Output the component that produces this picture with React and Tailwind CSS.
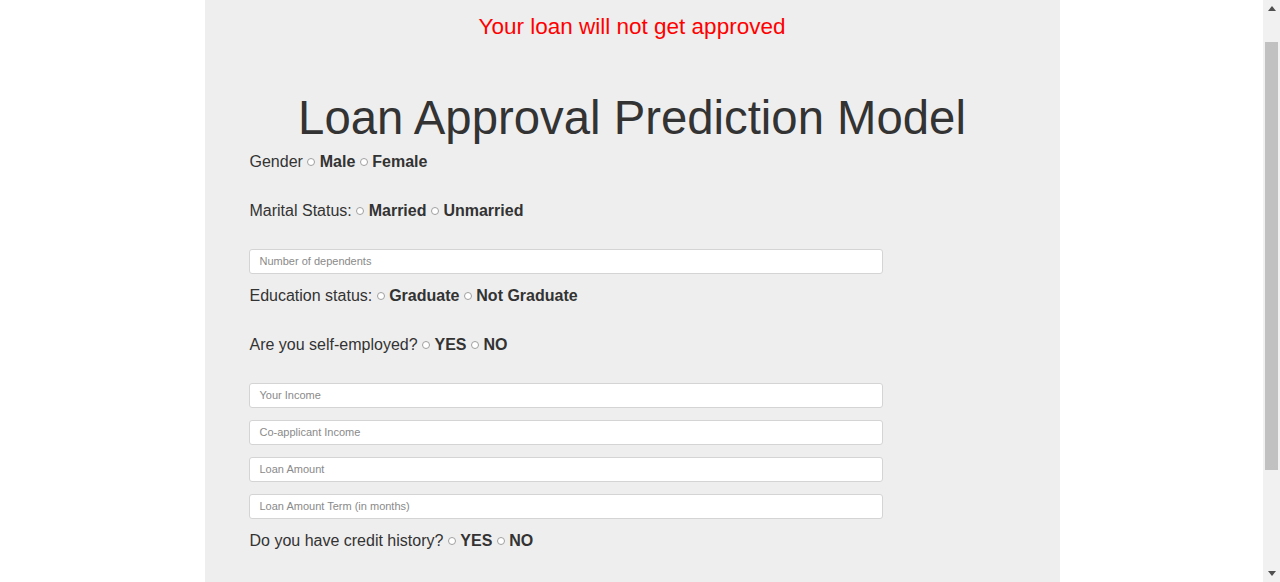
import React from 'react'

// Loan form page, shown scrolled with the result message at the top.

const font = { fontFamily: '"Liberation Sans", Arial, sans-serif' }

function Radio() {
  return <span className="inline-block w-[8px] h-[8px] rounded-full border border-[#a0a0a0] bg-white align-middle -mt-[2px]" />
}

function Choice({ label, options, top }) {
  return (
    <div className={`text-[16px] leading-[18px] text-[#333333] ${top}`}>
      {label}
      {options.map((o) => (
        <React.Fragment key={o}>
          {' '}<Radio />{' '}
          <b className="font-bold">{o}</b>
        </React.Fragment>
      ))}
    </div>
  )
}

function Field({ placeholder, top }) {
  return (
    <div className={`w-[634px] h-[25px] bg-white border border-[#d4d4d4] rounded-[3px] flex items-center px-[10px] text-[11px] text-[#8a8a8a] ${top}`}>
      {placeholder}
    </div>
  )
}

function Scrollbar() {
  return (
    <div className="w-[17px] h-full bg-[#f1f1f1] flex flex-col items-center shrink-0">
      <div className="h-[17px] flex items-center justify-center">
        <svg width="8" height="5" viewBox="0 0 8 5"><path d="M4 0 L8 5 L0 5 Z" fill="#505050" /></svg>
      </div>
      <div className="flex-1 w-full flex flex-col px-[2px]">
        <div className="h-[25px]" />
        <div className="h-[428px] bg-[#c1c1c1]" />
      </div>
      <div className="h-[17px] flex items-center justify-center">
        <svg width="8" height="5" viewBox="0 0 8 5"><path d="M0 0 L8 0 L4 5 Z" fill="#505050" /></svg>
      </div>
    </div>
  )
}

export default function App() {
  return (
    <div className="flex w-[1280px] h-[582px] overflow-hidden bg-white" style={font}>
      <div className="flex-1 flex justify-center">
        <div className="w-[855px] h-full bg-[#eeeeee] ml-[1px] pl-[44px] pr-[44px] flex flex-col">
          <div className="text-center text-[22.5px] leading-[26px] text-[#ff0000] mt-[14px]">
            Your loan will not get approved
          </div>
          <h1 className="text-center text-[47.3px] leading-[56px] text-[#333333] mt-[50px] -mx-[44px]">
            Loan Approval Prediction Model
          </h1>
          <Choice label="Gender" options={['Male', 'Female']} top="mt-[7px] pl-[1px]" />
          <Choice label="Marital Status:" options={['Married', 'Unmarried']} top="mt-[31px] pl-[1px]" />
          <Field placeholder="Number of dependents" top="mt-[29px]" />
          <Choice label="Education status:" options={['Graduate', 'Not Graduate']} top="mt-[13px] pl-[1px]" />
          <Choice label="Are you self-employed?" options={['YES', 'NO']} top="mt-[31px] pl-[1px]" />
          <Field placeholder="Your Income" top="mt-[29px]" />
          <Field placeholder="Co-applicant Income" top="mt-[12px]" />
          <Field placeholder="Loan Amount" top="mt-[12px]" />
          <Field placeholder="Loan Amount Term (in months)" top="mt-[12px]" />
          <Choice label="Do you have credit history?" options={['YES', 'NO']} top="mt-[13px] pl-[1px]" />
        </div>
      </div>
      <Scrollbar />
    </div>
  )
}
